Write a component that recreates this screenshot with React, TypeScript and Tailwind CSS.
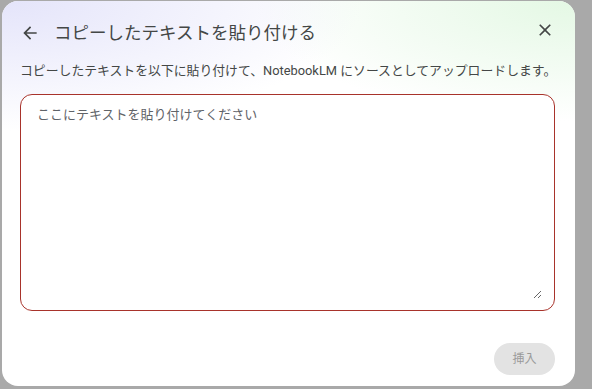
import { useState } from 'react';

const font = { fontFamily: 'Roboto, "Noto Sans CJK JP", sans-serif' };

export default function App() {
  const [text, setText] = useState('');

  return (
    <div className="w-[592px] h-[389px] bg-[#a9a9a9] overflow-hidden" style={font}>
      <div className="ml-[2px] mt-[1px] w-[573px] h-[385px] rounded-[16px] bg-white overflow-hidden">
        <div className="h-full pl-[18px] pr-[20px] bg-[radial-gradient(ellipse_360px_130px_at_0%_0%,#e4e4fa,transparent),radial-gradient(ellipse_320px_120px_at_100%_0%,#e4f8e4,transparent)]">
          {/* header */}
          <div className="pt-[19px] flex items-center h-[44px]">
            <button className="w-[20px] h-[20px] text-[#444746]">
              <svg viewBox="0 -960 960 960" width="20" height="20" fill="currentColor">
                <path d="M313-440l224 224-57 56-320-320 320-320 57 56-224 224h487v80H313Z" />
              </svg>
            </button>
            <h2 className="ml-[14px] text-[17.5px] text-[#444746] leading-[24px]">コピーしたテキストを貼り付ける</h2>
            <button className="ml-auto w-[20px] h-[20px] mb-[6px] text-[#444746]">
              <svg viewBox="0 -960 960 960" width="20" height="20" fill="currentColor">
                <path d="m256-200-56-56 224-224-224-224 56-56 224 224 224-224 56 56-224 224 224 224-56 56-224-224-224 224Z" />
              </svg>
            </button>
          </div>

          <p className="mt-[16px] text-[12.85px] leading-[20px] text-[#444746] whitespace-nowrap">
            コピーしたテキストを以下に貼り付けて、NotebookLM にソースとしてアップロードします。
          </p>

          <div className="mt-[13px] w-[535px] h-[217px] rounded-[12px] border border-[#a8332b] bg-white pt-[10px] pb-[11px] pl-[12px] pr-[12px]">
            <textarea
              value={text}
              onChange={(e) => setText(e.target.value)}
              placeholder="ここにテキストを貼り付けてください"
              className="block w-full h-full pl-[4px] text-[13px] leading-[20px] text-[#1f1f1f] placeholder:text-[#5f6368] outline-none bg-transparent"
            />
          </div>

          <div className="mt-[32px] flex justify-end">
            <button className="w-[61px] h-[32px] rounded-full bg-[#e3e3e3] text-[12px] text-[#9a9a9a]">挿入</button>
          </div>
        </div>
      </div>
    </div>
  );
}
